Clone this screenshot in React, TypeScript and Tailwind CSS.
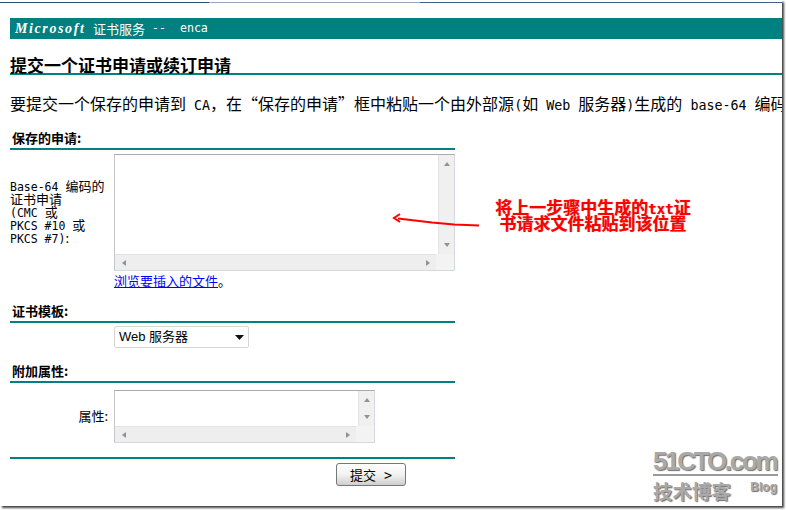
import React from 'react';

const cjk = "font-['SimSun','Noto_Sans_CJK_SC',sans-serif]";

function M({ children, className = 'text-[13.33px]' }: { children: React.ReactNode; className?: string }) {
  return <span className={`font-['DejaVu_Sans_Mono',monospace] whitespace-pre ${className}`}>{children}</span>;
}

function Arrow({ dir }: { dir: 'up' | 'down' | 'left' | 'right' }) {
  const points = {
    up: '1,6 4,2 7,6',
    down: '1,2 4,6 7,2',
    left: '6,1 2,4 6,7',
    right: '2,1 6,4 2,7',
  }[dir];
  return (
    <svg width="8" height="8" viewBox="0 0 8 8" className="shrink-0">
      <polygon points={points} fill="#929292" />
    </svg>
  );
}

function FakeTextarea({ width, height }: { width: string; height: string }) {
  return (
    <div className={`${width} ${height} flex flex-col border border-[#d5d8dc] border-t-[#a9a9ae] border-l-[#c4c6cc] bg-[#eeeeee]`}>
      <div className="flex flex-1 min-h-0">
        <div className="flex-1 bg-white" />
        <div className="w-[16px] flex flex-col items-center justify-between bg-[#f0f0f0] border-l border-[#e4e4e4] py-[5px]">
          <Arrow dir="up" />
          <Arrow dir="down" />
        </div>
      </div>
      <div className="h-[16px] flex shrink-0">
        <div className="flex-1 flex items-center justify-between pl-[5px] pr-[4px] bg-[#eeeeee] border-t border-[#e2e2e2]">
          <Arrow dir="left" />
          <Arrow dir="right" />
        </div>
        <div className="w-[18px] bg-[#f3f3f3]" />
      </div>
    </div>
  );
}

function SectionHead({ title, className = '' }: { title: string; className?: string }) {
  return (
    <div className={`w-[445px] h-[18px] border-b-2 border-[#008080] pl-[2px] text-[13px] leading-[12px] font-bold text-black ${className}`}>
      {title}
    </div>
  );
}

function LabelLine({ children }: { children: React.ReactNode }) {
  return <div className="h-[13px] leading-[13px] whitespace-nowrap">{children}</div>;
}

export default function App() {
  return (
    <div className={`relative w-[786px] h-[510px] overflow-hidden bg-white text-black ${cjk}`}>
      <div className="w-[782px] h-[506px] bg-white shadow-[2px_2px_2px_#444444] overflow-hidden">
        {/* window top edge */}
        <div className="flex h-[1px] mt-[2px]">
          <div className="w-[209px] bg-[#2f4f6f]" />
          <div className="w-[211px] bg-[#9aa8bb]" />
          <div className="flex-1 bg-[#44627f]" />
        </div>

        <div className="pl-[10px]">
          {/* banner */}
          <div className="mt-[15px] h-[21px] bg-[#008080] flex items-center pl-[5px] text-white text-[13px] whitespace-pre">
            <span className="w-[78px] font-['Liberation_Serif',serif] italic font-bold text-[14px] tracking-[1.6px]">Microsoft</span>
            <span>证书服务</span>
            <M className="text-[11.6px]"> --  enca</M>
          </div>

          {/* title */}
          <div className="mt-[17px] h-[19px] border-b-2 border-[#008080] text-[17px] leading-[18px] font-bold">
            提交一个证书申请或续订申请
          </div>

          {/* description */}
          <div className="mt-[18px] h-[20px] text-[16px] leading-[20px] whitespace-nowrap overflow-hidden">
            要提交一个保存的申请到<M> CA</M>{'\uFF0C'}在“保存的申请”框中粘贴一个由外部源<M>(</M>如<M> Web </M>服务器<M>)</M>生成的<M> base-64 </M>编码的证书申请
          </div>

          <SectionHead title="保存的申请:" className="mt-[19px]" />

          {/* saved request */}
          <div className="mt-[4px] flex w-[445px]">
            <div className="w-[104px] self-center text-[13px] pb-[3px]">
              <LabelLine><M className="text-[11.5px]">Base-64 </M>编码的</LabelLine>
              <LabelLine>证书申请</LabelLine>
              <LabelLine><M className="text-[11.5px]">(CMC </M>或</LabelLine>
              <LabelLine><M className="text-[11.5px]">PKCS #10 </M>或</LabelLine>
              <LabelLine><M className="text-[11.5px]">PKCS #7)</M>:</LabelLine>
            </div>
            <FakeTextarea width="w-[341px]" height="h-[117px]" />
          </div>
          <div className="mt-[1px] ml-[104px] h-[18px] text-[13px] leading-[18px]">
            <span className="text-[#0000ff] underline">浏览要插入的文件</span>。
          </div>

          <SectionHead title="证书模板:" className="mt-[15px]" />

          {/* template select */}
          <div className="mt-[3px] ml-[104px] w-[135px] h-[22px] flex items-center justify-between pl-[4px] pr-[4px] bg-white border border-[#d6d6d6] rounded-[2px] font-['Liberation_Sans','Noto_Sans_CJK_SC',sans-serif] text-[13px]">
            <span>Web 服务器</span>
            <svg width="9" height="5" viewBox="0 0 9 5"><polygon points="0,0 9,0 4.5,5" fill="#111111" /></svg>
          </div>

          <SectionHead title="附加属性:" className="mt-[17px]" />

          {/* attributes */}
          <div className="mt-[7px] flex w-[445px] items-center">
            <div className="w-[104px] pr-[6px] text-right text-[13px] leading-[15px] pb-[2px]">属性:</div>
            <FakeTextarea width="w-[261px]" height="h-[53px]" />
          </div>

          <div className="mt-[14px] w-[445px] h-[2px] bg-[#008080]" />

          {/* submit */}
          <div className="mt-[4px] w-[445px] pl-[326px] flex">
            <button className="w-[70px] h-[23px] border border-[#777777] rounded-[3px] bg-gradient-to-b from-[#ffffff] via-[#f2f2f2] to-[#cfcfcf] text-[13px] leading-[19px] text-black">
              提交<M> &gt;</M>
            </button>
          </div>
        </div>
      </div>

      {/* red annotation */}
      <div className="absolute left-[478px] top-[199px] w-[230px] text-center text-[17px] font-bold text-[#ff0000] [text-shadow:0_0_1px_rgba(170,0,0,0.6)]">
        <div className="h-[16px] leading-[16px]">将上一步骤中生成的<M className="text-[14px]">txt</M>证</div>
        <div className="h-[16px] leading-[16px]">书请求文件粘贴到该位置</div>
      </div>
      <svg className="absolute left-[390px] top-[212px]" width="92" height="18" viewBox="0 0 92 18">
        <path d="M89 13.5 L64 12.5 L42 10.5 L8 6.5" fill="none" stroke="#ff0000" strokeWidth="2" />
        <path d="M10 2 L4 6 L10 10" fill="none" stroke="#ff0000" strokeWidth="2" />
      </svg>

      {/* watermark */}
      <div className="absolute left-[653px] top-[446px] w-[125px] text-[#a9a9a9] [text-shadow:1px_1px_1px_#707070]">
        <div className="h-[30px] border-b-2 border-[#9a9a9a] font-['Liberation_Sans',sans-serif] font-bold text-[26px] leading-[30px] tracking-[-2.3px] whitespace-nowrap">
          51CTO.com
        </div>
        <div className="flex items-start justify-between pt-[3px]">
          <span className="text-[19.5px] leading-[24px] font-bold">技术博客</span>
          <span className="font-['Liberation_Sans',sans-serif] font-bold text-[12px] leading-[16px] mr-[1px]">Blog</span>
        </div>
      </div>
    </div>
  );
}
